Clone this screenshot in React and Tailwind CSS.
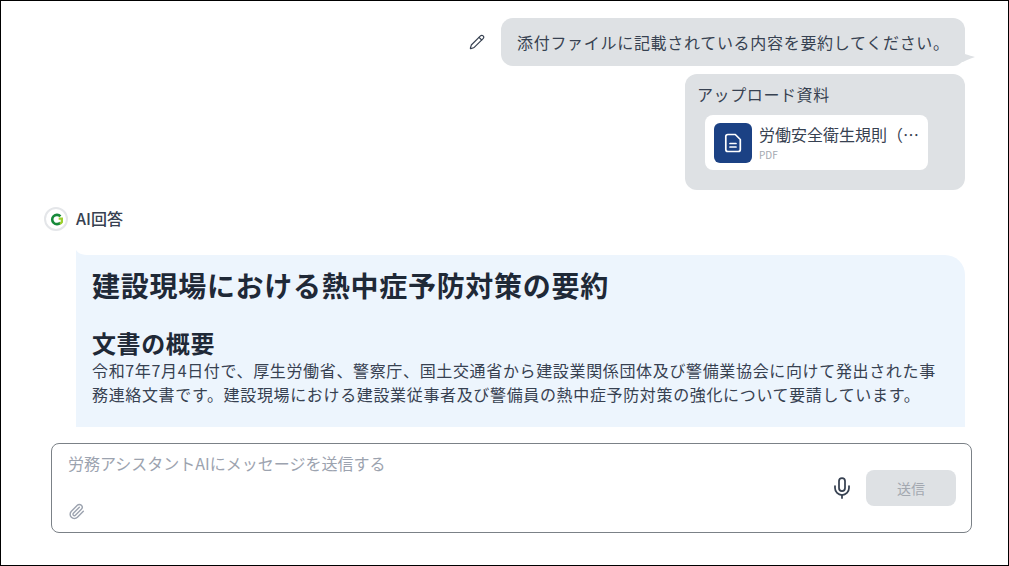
import React from "react";
import { Pencil, Mic, Paperclip } from "lucide-react";

export default function App() {
  return (
    <div lang="ja" className="w-[1009px] h-[566px] bg-white overflow-hidden">
      <div className="w-[1009px] h-[566px] border border-black flex flex-col font-['Noto_Sans_CJK_JP',sans-serif] text-[#1f2937]">
        <div className="h-[426px] shrink-0 overflow-hidden flex flex-col pt-[17px] pl-[43px] pr-[43px]">
          <div className="flex justify-end items-center gap-[16px]">
            <Pencil className="w-[16px] h-[16px] text-[#374151]" strokeWidth={1.75} />
            <div className="relative w-[464px] h-[48px] bg-[#dee1e4] rounded-[12px] pl-[16px] flex items-center text-[16px] tracking-[0.7px] text-[#374151] whitespace-nowrap">
              添付ファイルに記載されている内容を要約してください。
              <svg className="absolute left-[460px] top-[31px]" width="14" height="14" viewBox="0 0 14 14">
                <path d="M0 3 C3 5 7 6 14 8 C9 10 5 11 2 13 L0 13 Z" fill="#dee1e4" />
              </svg>
            </div>
          </div>
          <div className="self-end mt-[8px] w-[280px] h-[116px] bg-[#dee1e4] rounded-[12px] pt-[8px] pl-[12px] flex flex-col">
            <div className="text-[16px] leading-[24px] tracking-[0.6px] text-[#374151]">アップロード資料</div>
            <div className="mt-[9px] ml-[8px] w-[223px] h-[55px] bg-white rounded-[8px] flex items-center pl-[9px] gap-[7px]">
              <div className="w-[38px] h-[40px] rounded-[6px] bg-[#1b4184] flex items-center justify-center">
                <svg width="18" height="20" viewBox="0 0 18 20" fill="none" stroke="white" strokeWidth="1.7" strokeLinejoin="round" strokeLinecap="round">
                  <path d="M3 1.5h7.5L15.5 6.5V16.5a2 2 0 0 1-2 2H3a2 2 0 0 1-2-2V3.5a2 2 0 0 1 2-2Z" transform="translate(0.8 0)" />
                  <path d="M6 10.5h6M6 14h6" />
                </svg>
              </div>
              <div className="flex flex-col w-[162px]">
                <div className="text-[16px] leading-[22px] text-[#374151] truncate">労働安全衛生規則（第四次改正</div>
                <div className="text-[10px] leading-[14px] mt-[3px] text-[#a3a8b0]">PDF</div>
              </div>
            </div>
          </div>
          <div className="mt-[17px] flex items-center gap-[8px]">
            <div className="w-[24px] h-[24px] rounded-full border-2 border-[#e4e6e9] bg-white flex items-center justify-center">
              <svg width="13" height="13" viewBox="0 0 12 12" fill="none">
                <path d="M9.6 3.2A4.3 4.3 0 1 0 9.6 8.8" stroke="#16893a" strokeWidth="2.4" />
                <path d="M8 5.2h3v3a3 3 0 0 1-2 1.5" stroke="#9bcf2e" strokeWidth="2.2" />
              </svg>
            </div>
            <div className="text-[16px] leading-[20px] pb-[2px] font-medium text-[#374151]">AI回答</div>
          </div>
          <div className="relative mt-[24px] ml-[32px] w-[889px] h-[172px] shrink-0 bg-[#edf5fd] rounded-tr-[20px] pl-[16px] pr-[16px] pt-[12px]">
            <svg className="absolute -top-[5px] left-0" width="14" height="10" viewBox="0 0 14 10">
              <path d="M0 0 C2 3 5 5 14 5 L14 10 L0 10 Z" fill="#edf5fd" />
            </svg>
            <h1 className="text-[28px] leading-[36px] tracking-[0.72px] font-bold text-[#1f2937]">建設現場における熱中症予防対策の要約</h1>
            <h2 className="mt-[24px] text-[24px] leading-[32px] tracking-[0.6px] font-bold text-[#1f2937]">文書の概要</h2>
            <p className="mt-[-1px] text-[16px] leading-[24px] tracking-[0.65px] text-[#374151]">令和7年7月4日付で、厚生労働省、警察庁、国土交通省から建設業関係団体及び警備業協会に向けて発出された事務連絡文書です。建設現場における建設業従事者及び警備員の熱中症予防対策の強化について要請しています。</p>
          </div>
        </div>
        <div className="mt-[16px] ml-[50px] w-[921px] h-[90px] shrink-0 border border-[#7b8187] rounded-[8px] bg-white flex flex-col pl-[16px] pr-[15px] pt-[8px]">
          <div className="text-[16px] leading-[22px] text-[#9ca3af]">労務アシスタントAIにメッセージを送信する</div>
          <div className="flex items-start justify-between mt-[6px]">
            <Paperclip className="w-[17px] h-[17px] mt-[23px] text-[#9ca3af]" />
            <div className="flex items-center gap-[12px] -mt-[10px]">
              <Mic className="w-[24px] h-[24px] text-[#374151]" strokeWidth={1.75} />
              <div className="w-[90px] h-[36px] rounded-[8px] bg-[#dee1e4] text-[#a3a8b0] text-[14px] flex items-center justify-center">送信</div>
            </div>
          </div>
        </div>
      </div>
    </div>
  );
}
